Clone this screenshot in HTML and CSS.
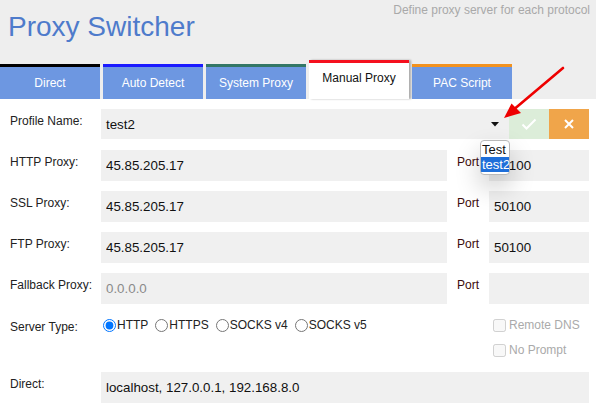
FILE: index.html
```html
<!DOCTYPE html>
<html>
<head>
<meta charset="utf-8">
<link rel="stylesheet" href="styles.css">
</head>
<body>
<div class="page">
  <header class="header">
    <div class="top">
      <h1 class="title">Proxy Switcher</h1>
      <div class="subtitle">Define proxy server for each protocol</div>
    </div>
    <nav class="tabs">
      <div class="tab t-direct">Direct</div>
      <div class="tab t-auto">Auto Detect</div>
      <div class="tab t-system">System Proxy</div>
      <div class="tab t-manual active">Manual Proxy</div>
      <div class="tab t-pac">PAC Script</div>
    </nav>
  </header>

  <main class="form">
    <div class="lbl">Profile Name:</div>
    <div class="profile">
      <div class="select">
        <span class="select-text">test2</span>
        <svg class="caret" width="8" height="5" viewBox="0 0 8 5"><polygon points="0,0 8,0 4,4.5" fill="#111"/></svg>
      </div>
      <button class="btn ok" type="button">
        <svg width="16" height="12" viewBox="0 0 16 12"><polyline points="1.5,6.5 5.5,10.5 14.5,1.5" fill="none" stroke="#fff" stroke-width="2"/></svg>
      </button>
      <button class="btn cancel" type="button">
        <svg width="10" height="10" viewBox="0 0 10 10"><path d="M1 1 L9 9 M9 1 L1 9" stroke="#fff" stroke-width="2" fill="none"/></svg>
      </button>
    </div>

    <div class="lbl">HTTP Proxy:</div>
    <input class="field" type="text" value="45.85.205.17">
    <div class="lbl port">Port</div>
    <input class="field" type="text" value="50100">

    <div class="lbl">SSL Proxy:</div>
    <input class="field" type="text" value="45.85.205.17">
    <div class="lbl port">Port</div>
    <input class="field" type="text" value="50100">

    <div class="lbl">FTP Proxy:</div>
    <input class="field" type="text" value="45.85.205.17">
    <div class="lbl port">Port</div>
    <input class="field" type="text" value="50100">

    <div class="lbl">Fallback Proxy:</div>
    <input class="field" type="text" placeholder="0.0.0.0">
    <div class="lbl port">Port</div>
    <input class="field" type="text">

    <div class="lbl server-lbl">Server Type:</div>
    <div class="radios">
      <label class="radio"><input type="radio" name="st" checked>HTTP</label>
      <label class="radio"><input type="radio" name="st">HTTPS</label>
      <label class="radio"><input type="radio" name="st">SOCKS v4</label>
      <label class="radio"><input type="radio" name="st">SOCKS v5</label>
    </div>
    <div class="checks">
      <label class="check"><input type="checkbox" disabled>Remote DNS</label>
      <label class="check"><input type="checkbox" disabled>No Prompt</label>
    </div>

    <div class="lbl">Direct:</div>
    <input class="field wide" type="text" value="localhost, 127.0.0.1, 192.168.8.0">
  </main>

  <div class="popup">
    <div class="opt">Test</div>
    <div class="opt sel">test2</div>
  </div>

  <svg class="arrow" width="596" height="410" viewBox="0 0 596 410">
    <line x1="563" y1="68" x2="512" y2="111" stroke="#ee0000" stroke-width="2.6" stroke-linecap="round"/>
    <polygon points="504,118 511.5,103.5 521,113" fill="#ee0000"/>
  </svg>
</div>
</body>
</html>
```

FILE: styles.css
```css
html, body {
  margin: 0;
  padding: 0;
  background: #fff;
}

body {
  font-family: "Liberation Sans", Arial, sans-serif;
  color: #222;
}

.page {
  position: relative;
  width: 596px;
  height: 410px;
  overflow: hidden;
}

.header {
  background: #eeeeee;
  height: 99px;
  display: flex;
  flex-direction: column;
}

.top {
  height: 60px;
  display: flex;
  justify-content: space-between;
  align-items: flex-start;
  padding: 0 6px 0 8px;
}

.title {
  margin: 11px 0 0 0;
  font-size: 28px;
  line-height: 32px;
  font-weight: normal;
  color: #4e7bcb;
}

.subtitle {
  margin-top: 3px;
  font-size: 12px;
  line-height: 14px;
  color: #a9a9a9;
}

.tabs {
  height: 39px;
  display: flex;
  align-items: flex-end;
  gap: 3px;
}

.tab {
  width: 100px;
  height: 35px;
  box-sizing: border-box;
  border-top: 3px solid #000;
  padding-top: 9px;
  background: #6d97e1;
  color: #fff;
  font-size: 12px;
  line-height: 14px;
  text-align: center;
}

.t-direct { border-top-color: #000; }
.t-auto { border-top-color: #1a1aff; }
.t-system { border-top-color: #337766; }
.t-manual { border-top-color: #f5101e; }
.t-pac { border-top-color: #f2921f; }

.tab.active {
  height: 39px;
  padding-top: 8px;
  background: #fff;
  color: #111;
  box-shadow: 2px 0 2px rgba(0, 0, 0, 0.28);
}

.form {
  padding-top: 10px;
  display: grid;
  grid-template-columns: 101px 346px 42px 100px;
  grid-auto-rows: 31px;
  row-gap: 10px;
}

.lbl {
  padding: 5px 0 0 10px;
  font-size: 12px;
  line-height: 14px;
  color: #222;
}

.lbl.port {
  color: #3c0b0b;
}

.field {
  height: 31px;
  box-sizing: border-box;
  border: 0;
  margin: 0;
  padding: 0 5px;
  background: #f0f0f0;
  font-family: "Liberation Sans", Arial, sans-serif;
  font-size: 13.33px;
  color: #111;
  width: 100%;
  outline: none;
}

.field::placeholder {
  color: #8a8a8a;
}

.field.wide {
  grid-column: 2 / 5;
}

.profile {
  grid-column: 2 / 5;
  display: flex;
  height: 30px;
}

.select {
  flex: 1;
  display: flex;
  align-items: center;
  justify-content: space-between;
  background: #f0f0f0;
  padding: 0 10px 0 5px;
  font-size: 13.33px;
  color: #111;
}

.select-text {
  padding-top: 1px;
}

.caret {
  display: block;
}

.btn {
  width: 40px;
  height: 30px;
  border: 0;
  margin: 0;
  padding: 0;
  display: flex;
  align-items: center;
  justify-content: center;
}

.btn.ok { background: #dcedd9; }
.btn.cancel { background: #f0a54a; }

.server-lbl {
  padding-top: 6px;
}

.form .server-lbl,
.form .radios,
.form .checks {
  grid-row: span 1;
}

.radios {
  grid-column: 2 / 4;
  display: flex;
  align-items: center;
  gap: 5px;
  height: 20px;
  margin-top: 1px;
  font-size: 12px;
}

.radio {
  display: flex;
  align-items: center;
  color: #222;
}

.radio input {
  margin: 0 1px 0 2px;
  width: 13px;
  height: 13px;
}

.checks {
  grid-column: 4;
  display: flex;
  flex-direction: column;
  gap: 5px;
  margin-top: 1px;
  height: 48px;
  font-size: 12px;
}

.check {
  display: flex;
  align-items: center;
  height: 20px;
  color: #aaa;
}

.check input {
  margin: 0 3px 0 4px;
  width: 13px;
  height: 13px;
}

.form > .checks + .lbl,
.form > .checks + .lbl + .field {
  margin-top: 17px;
}

.popup {
  position: absolute;
  left: 480px;
  top: 140px;
  width: 30px;
  box-sizing: border-box;
  background: #fff;
  border: 1px solid #b9b9b9;
  border-radius: 4px;
  padding: 1px 0 2px 0;
  font-size: 13px;
  line-height: 15px;
  color: #111;
  box-shadow: 0 12px 26px rgba(0, 0, 0, 0.2);
  overflow: hidden;
}

.opt {
  padding-left: 1px;
  white-space: nowrap;
}

.opt.sel {
  background: #1f6fd9;
  color: #fff;
}

.arrow {
  position: absolute;
  left: 0;
  top: 0;
  pointer-events: none;
}
```
